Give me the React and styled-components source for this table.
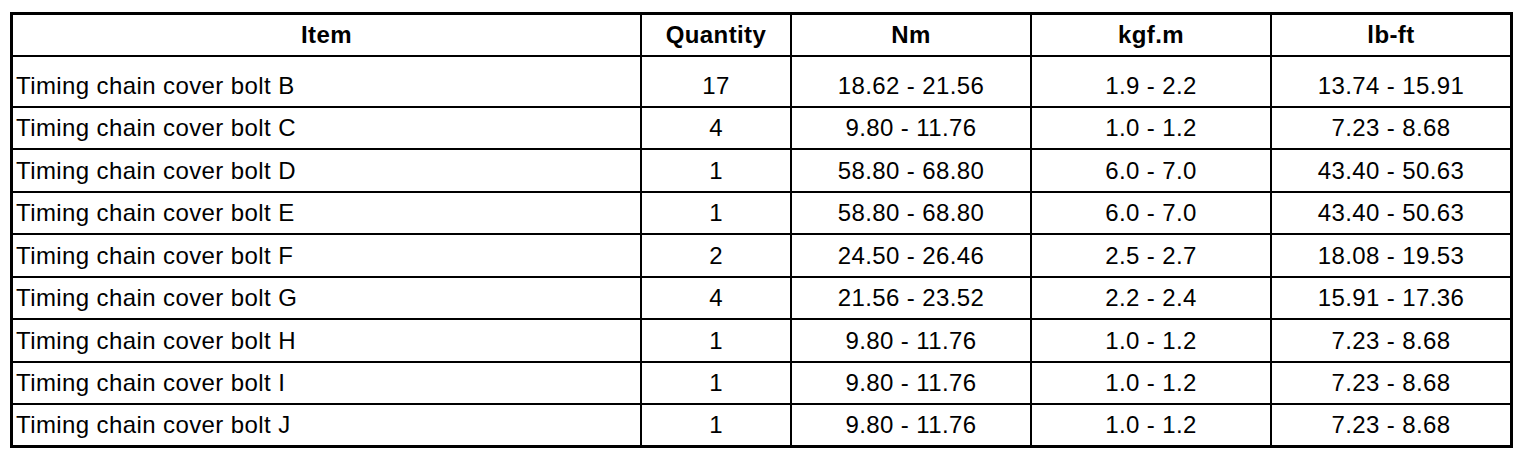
import styled, { createGlobalStyle } from "styled-components"

const GlobalStyle = createGlobalStyle`
    body {
        margin: 0;
        background: #fff;
        font-family: "Liberation Sans", Arial, sans-serif;
        color: #000;
    }
`

const columns = ["Item", "Quantity", "Nm", "kgf.m", "lb-ft"]

const rows = [
    ["Timing chain cover bolt B", "17", "18.62 - 21.56", "1.9 - 2.2", "13.74 - 15.91"],
    ["Timing chain cover bolt C", "4", "9.80 - 11.76", "1.0 - 1.2", "7.23 - 8.68"],
    ["Timing chain cover bolt D", "1", "58.80 - 68.80", "6.0 - 7.0", "43.40 - 50.63"],
    ["Timing chain cover bolt E", "1", "58.80 - 68.80", "6.0 - 7.0", "43.40 - 50.63"],
    ["Timing chain cover bolt F", "2", "24.50 - 26.46", "2.5 - 2.7", "18.08 - 19.53"],
    ["Timing chain cover bolt G", "4", "21.56 - 23.52", "2.2 - 2.4", "15.91 - 17.36"],
    ["Timing chain cover bolt H", "1", "9.80 - 11.76", "1.0 - 1.2", "7.23 - 8.68"],
    ["Timing chain cover bolt I", "1", "9.80 - 11.76", "1.0 - 1.2", "7.23 - 8.68"],
    ["Timing chain cover bolt J", "1", "9.80 - 11.76", "1.0 - 1.2", "7.23 - 8.68"],
]

export default function App() {
    return (
        <>
            <GlobalStyle />
            <Page>
                <Table role="table">
                    {columns.map(c => (
                        <HeadCell key={c} role="columnheader">{c}</HeadCell>
                    ))}
                    {rows.map((row, r) =>
                        row.map((value, i) => (
                            <Cell key={r + "-" + i} role="cell" $left={i === 0} $first={r === 0}>
                                {value}
                            </Cell>
                        ))
                    )}
                </Table>
            </Page>
        </>
    )
}

const Page = styled.main`
    padding: 12px 0 0 10px;
`

const Table = styled.div`
    display: grid;
    width: fit-content;
    grid-template-columns: 627px 148px 238px 238px 238px;
    grid-template-rows: 40px 49px 40px 41px 40px 41px 40px 41px 40px 40px;
    gap: 2px;
    padding: 3px;
    background: #000;
`

const Cell = styled.div`
    display: flex;
    align-items: center;
    justify-content: ${props => props.$left ? "flex-start" : "center"};
    padding: ${props => props.$first ? "9px" : "0"} 0 0 ${props => props.$left ? "3px" : "0"};
    background: #fff;
    font-size: 24px;
    letter-spacing: 0.4px;
    line-height: 26px;
    white-space: nowrap;
`

const HeadCell = styled(Cell)`
    justify-content: center;
    padding: 0;
    font-weight: bold;
`
